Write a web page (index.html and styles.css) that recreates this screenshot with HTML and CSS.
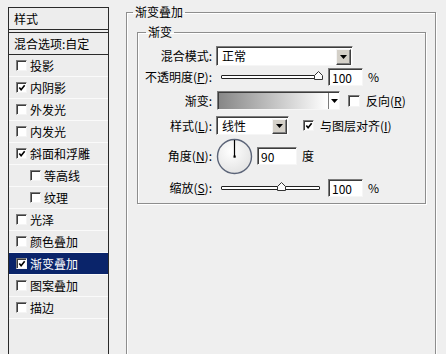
FILE: index.html
```html
<!DOCTYPE html>
<html lang="zh-CN">
<head>
    <meta charset="UTF-8">
    <title>图层样式 - 渐变叠加</title>
    <link rel="stylesheet" href="styles.css">
</head>
<body>
    <div class="dialog">
        <div class="styles-panel">
            <div class="panel-title">样式</div>
            <ul class="style-list">
                <li class="blend">混合选项:自定</li>
                <li><span class="cb"></span>投影</li>
                <li><span class="cb"><svg viewBox="0 0 9 9"><polyline points="1.5,4 3.5,6.5 7.5,1.5"/></svg></span>内阴影</li>
                <li><span class="cb"></span>外发光</li>
                <li><span class="cb"></span>内发光</li>
                <li><span class="cb"><svg viewBox="0 0 9 9"><polyline points="1.5,4 3.5,6.5 7.5,1.5"/></svg></span>斜面和浮雕</li>
                <li class="sub"><span class="cb"></span>等高线</li>
                <li class="sub"><span class="cb"></span>纹理</li>
                <li><span class="cb"></span>光泽</li>
                <li><span class="cb"></span>颜色叠加</li>
                <li class="selected"><span class="cb"><svg viewBox="0 0 9 9"><polyline points="1.5,4 3.5,6.5 7.5,1.5"/></svg></span>渐变叠加</li>
                <li><span class="cb"></span>图案叠加</li>
                <li><span class="cb"></span>描边</li>
            </ul>
        </div>

        <fieldset class="group outer">
            <legend>渐变叠加</legend>
            <fieldset class="group inner">
                <legend>渐变</legend>

                <div class="row row-mode">
                    <span class="lbl">混合模式:</span>
                    <div class="select wide">
                        <span class="select-text">正常</span>
                        <span class="drop"><svg viewBox="0 0 7 4"><polygon points="0,0 7,0 3.5,4"/></svg></span>
                    </div>
                </div>

                <div class="row row-opacity">
                    <span class="lbl">不透明度(<u>P</u>):</span>
                    <div class="track">
                        <svg class="thumb thumb-opacity" viewBox="0 0 9 9"><polygon points="0.5,8.5 0.5,4.5 4.5,0.5 8.5,4.5 8.5,8.5"/></svg>
                    </div>
                    <span class="field">100</span>
                    <span class="unit">%</span>
                </div>

                <div class="row row-grad">
                    <span class="lbl">渐变:</span>
                    <div class="grad">
                        <span class="grad-fill"></span>
                        <span class="grad-drop"><svg viewBox="0 0 7 4"><polygon points="0,0 7,0 3.5,4"/></svg></span>
                    </div>
                    <span class="cb cb-reverse"></span>
                    <span class="opt">反向(<u>R</u>)</span>
                </div>

                <div class="row row-style">
                    <span class="lbl">样式(<u>L</u>):</span>
                    <div class="select narrow">
                        <span class="select-text">线性</span>
                        <span class="drop"><svg viewBox="0 0 7 4"><polygon points="0,0 7,0 3.5,4"/></svg></span>
                    </div>
                    <span class="cb cb-align"><svg viewBox="0 0 9 9"><polyline points="1.5,4 3.5,6.5 7.5,1.5"/></svg></span>
                    <span class="opt">与图层对齐(<u>I</u>)</span>
                </div>

                <div class="row row-angle">
                    <span class="lbl">角度(<u>N</u>):</span>
                    <svg class="dial" viewBox="0 0 37 37">
                        <defs>
                            <radialGradient id="dialFill" cx="0.4" cy="0.35" r="0.7">
                                <stop offset="0" stop-color="#ffffff"/>
                                <stop offset="1" stop-color="#e2e2e2"/>
                            </radialGradient>
                        </defs>
                        <circle cx="18.5" cy="18.5" r="17" fill="url(#dialFill)" stroke="#5b6478" stroke-width="1.4"/>
                        <line x1="18.5" y1="18.5" x2="18.5" y2="2" stroke="#000" stroke-width="1.2"/>
                        <rect x="17.5" y="17.5" width="2.2" height="2.2" fill="#000"/>
                    </svg>
                    <span class="field angle-field">90</span>
                    <span class="unit">度</span>
                </div>

                <div class="row row-scale">
                    <span class="lbl">缩放(<u>S</u>):</span>
                    <div class="track">
                        <svg class="thumb thumb-scale" viewBox="0 0 9 9"><polygon points="0.5,8.5 0.5,4.5 4.5,0.5 8.5,4.5 8.5,8.5"/></svg>
                    </div>
                    <span class="field">100</span>
                    <span class="unit">%</span>
                </div>
            </fieldset>
        </fieldset>
    </div>
</body>
</html>
```

FILE: styles.css
```css
* {
    box-sizing: border-box;
}
body {
    margin: 0;
    background: #efefef;
    color: #000;
    font-family: "Noto Sans CJK SC", "Liberation Sans", sans-serif;
    font-size: 12px;
    line-height: 14px;
    overflow: hidden;
}
u {
    text-decoration: underline;
    text-underline-offset: 1px;
}
.dialog {
    display: flex;
    align-items: flex-start;
    height: 354px;
    padding: 5px 0 0 8px;
    overflow: hidden;
}

/* left list of styles */
.styles-panel {
    flex: none;
    width: 101px;
    height: 347px;
    margin-top: 2px;
    border: 1px solid #2a2a2a;
    border-bottom: none;
    background: #ededed;
}
.panel-title {
    height: 22px;
    padding: 4px 0 0 5px;
    border-bottom: 1px solid #2a2a2a;
}
.style-list {
    list-style: none;
    margin: 2px 0 0;
    padding: 0;
    border-top: 1px solid #2a2a2a;
}
.style-list li {
    display: flex;
    align-items: center;
    gap: 3px;
    height: 22px;
    padding-left: 7px;
    border-bottom: 1px solid #fafafa;
}
.style-list li.blend {
    padding-left: 5px;
    border-bottom: 1px solid #2a2a2a;
}
.style-list li.sub {
    padding-left: 21px;
}
.style-list li.selected {
    background: #0a246a;
    color: #fff;
}

/* checkbox */
.cb {
    flex: none;
    display: inline-flex;
    align-items: center;
    justify-content: center;
    width: 11px;
    height: 11px;
    background: #fff;
    border: 1px solid;
    border-color: #7c7c7c #f4f4f4 #f4f4f4 #7c7c7c;
    box-shadow: inset 1px 1px 0 #3c3c3c;
}
.cb svg {
    width: 8px;
    height: 8px;
    margin: 1px 0 0 1px;
}
.cb polyline {
    fill: none;
    stroke: #000;
    stroke-width: 1.8;
}

/* group boxes */
.group {
    margin: 0;
    padding: 0;
    min-width: 0;
    border: 1px solid #8d8d8d;
    box-shadow: inset 1px 1px 0 #fff, 1px 1px 0 #fff;
}
.group > legend {
    padding: 0 2px;
    line-height: 14px;
}
.outer {
    flex: none;
    width: 310px;
    height: 349px;
    margin-left: 17px;
    border-bottom: none;
}
.outer > legend {
    margin-left: 6px;
}
.inner {
    margin: 6px 9px 0 10px;
    padding: 7px 0 6px;
}
.inner > legend {
    margin-left: 8px;
}

/* form rows */
.row {
    display: flex;
    align-items: center;
}
.lbl {
    flex: none;
    width: 74px;
    margin-right: 4px;
    text-align: right;
    white-space: nowrap;
}
.row-mode {
    height: 20px;
}
.row-opacity {
    height: 18px;
    margin-top: 2px;
}
.row-grad {
    height: 19px;
    margin-top: 5px;
}
.row-style {
    height: 19px;
    margin-top: 6px;
}
.row-angle {
    height: 36px;
    margin-top: 3px;
}
.row-scale {
    height: 18px;
    margin-top: 5px;
}

.select,
.field,
.grad {
    background: #fff;
    border: 1px solid;
    border-color: #7c7c7c #f6f6f6 #f6f6f6 #7c7c7c;
    box-shadow: inset 1px 1px 0 #3c3c3c;
}
.select {
    display: flex;
    align-items: center;
    height: 20px;
}
.select.wide {
    width: 137px;
}
.select.narrow {
    width: 73px;
    height: 19px;
}
.select-text {
    flex: 1;
    padding-left: 5px;
}
.drop {
    flex: none;
    display: flex;
    align-items: center;
    justify-content: center;
    width: 15px;
    height: calc(100% - 2px);
    margin-right: 1px;
    margin-top: 1px;
    background: #d4d0c8;
    border: 1px solid;
    border-color: #f4f4f4 #404040 #404040 #f4f4f4;
    box-shadow: inset -1px -1px 0 #808080;
}
.drop svg,
.grad-drop svg {
    width: 7px;
    height: 4px;
}
.drop polygon,
.grad-drop polygon {
    fill: #000;
}

/* slider */
.track {
    position: relative;
    flex: none;
    width: 99px;
    height: 4px;
    margin-left: 5px;
    background: #fff;
    border: 1px solid #222;
    border-radius: 1px;
}
.thumb {
    position: absolute;
    top: -5px;
    width: 9px;
    height: 9px;
}
.thumb polygon {
    fill: #fafafa;
    stroke: #333;
    stroke-width: 1;
}
.thumb-opacity {
    left: 92px;
}
.thumb-scale {
    left: 55px;
}
.field {
    flex: none;
    width: 35px;
    height: 18px;
    margin-left: 8px;
    padding: 2px 0 0 3px;
    line-height: 14px;
}
.unit {
    margin-left: 5px;
}

/* gradient swatch */
.grad {
    display: flex;
    width: 123px;
    height: 19px;
    margin-left: 1px;
    padding: 1px 0 0 1px;
}
.grad-fill {
    flex: 1;
    background: linear-gradient(to right, #878787, #ffffff);
}
.grad-drop {
    flex: none;
    display: flex;
    align-items: center;
    justify-content: center;
    width: 11px;
    background: #fff;
    border-left: 1px solid #7c7c7c;
}
.cb-reverse {
    margin-left: 8px;
    width: 12px;
    height: 12px;
}
.cb-align {
    margin-left: 14px;
}
.opt {
    margin-left: 6px;
    white-space: nowrap;
}

/* angle dial */
.dial {
    flex: none;
    width: 37px;
    height: 37px;
}
.angle-field {
    width: 40px;
    margin-left: 4px;
}
```
